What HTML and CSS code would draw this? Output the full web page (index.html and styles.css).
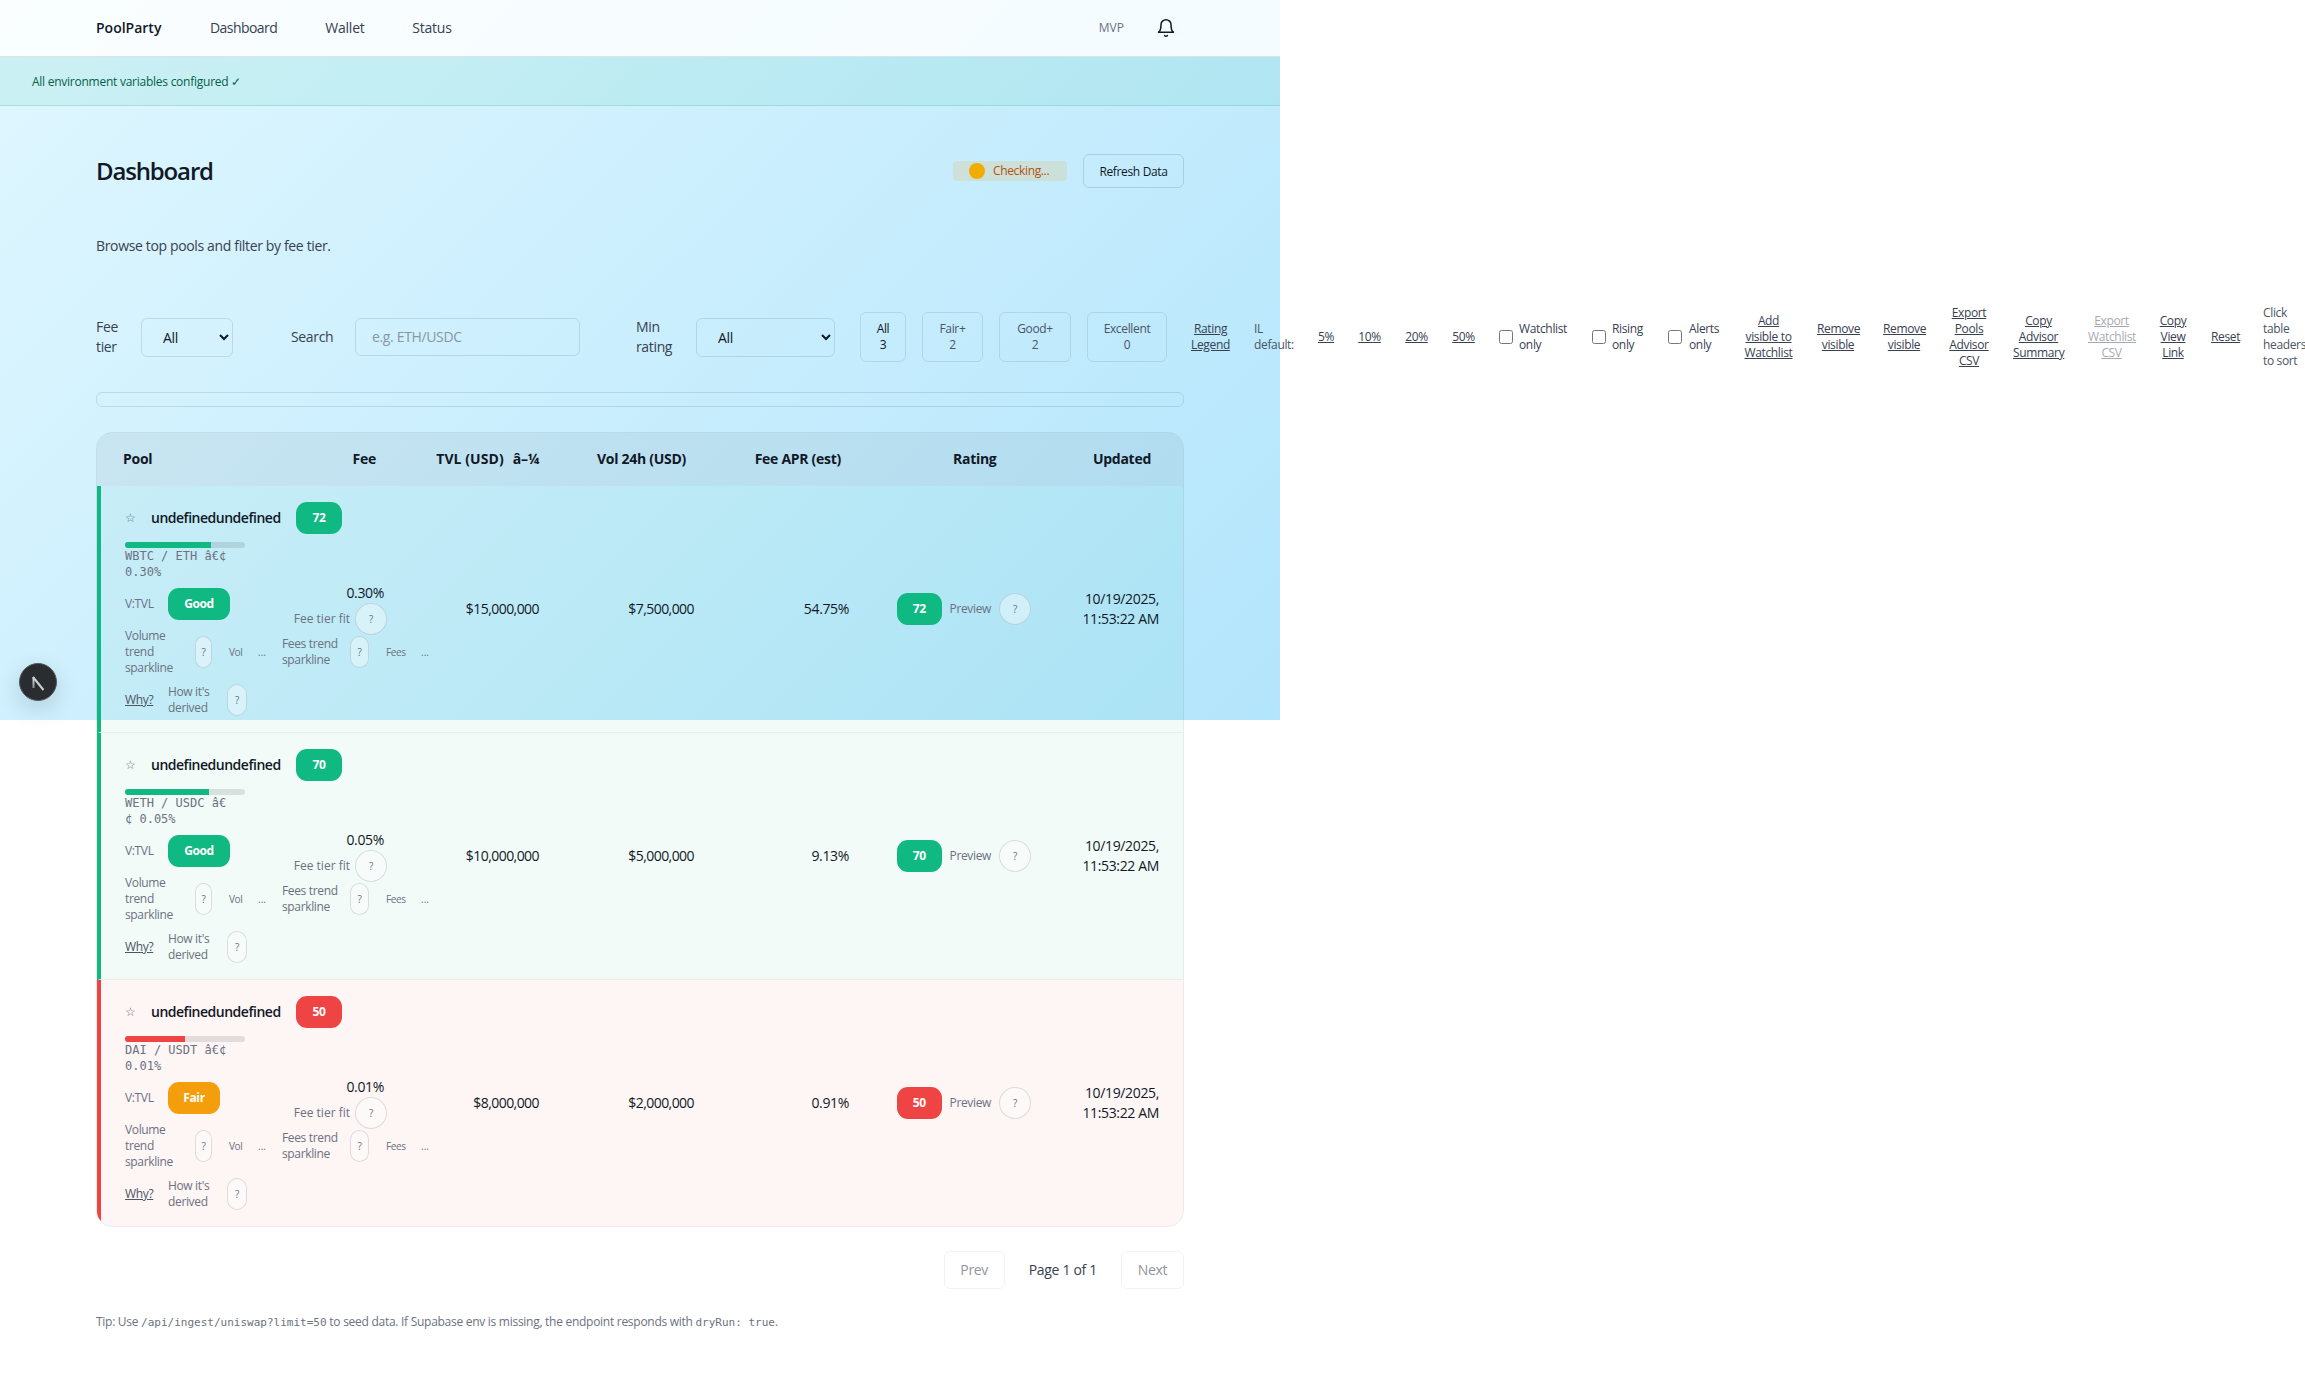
FILE: index.html
```html
<!DOCTYPE html>
<html lang="en">
<head>
<meta charset="utf-8">
<title>PoolParty</title>
<link rel="stylesheet" href="styles.css">
</head>
<body>
<div class="app">
  <nav class="nav">
    <div class="nav-left">
      <a class="brand">PoolParty</a>
      <a class="nav-link nl-tight">Dashboard</a>
      <a class="nav-link w39">Wallet</a>
      <a class="nav-link">Status</a>
    </div>
    <div class="nav-right">
      <span class="mvp">MVP</span>
      <button class="bell" aria-label="Notifications">
        <svg width="20" height="20" viewBox="0 0 24 24" fill="none" stroke="#111827" stroke-width="1.8" stroke-linecap="round" stroke-linejoin="round"><path d="M6 8a6 6 0 0 1 12 0c0 7 3 9 3 9H3s3-2 3-9"/><path d="M10.3 21a1.94 1.94 0 0 0 3.4 0"/></svg>
      </button>
    </div>
  </nav>
  <div class="banner">All environment variables configured ✓</div>
  <main class="main">
    <div class="title-row">
      <h1 class="title">Dashboard</h1>
      <div class="title-actions">
        <span class="status-pill"><span class="status-dot"></span>Checking...</span>
        <button class="refresh">Refresh Data</button>
      </div>
    </div>
    <p class="lead">Browse top pools and filter by fee tier.</p>

    <div class="filters">
      <label class="f-label w21">Fee tier</label>
      <select class="f-select sel-fee"><option>All</option></select>
      <label class="f-label f-gap w40">Search</label>
      <input class="f-input" placeholder="e.g. ETH/USDC">
      <label class="f-label f-gap2 w36">Min rating</label>
      <select class="f-select sel-rating"><option>All</option></select>
      <div class="pills">
        <button class="pill pill-on w46">All<br>3</button>
        <button class="pill w61">Fair+<br>2</button>
        <button class="pill w72">Good+<br>2</button>
        <button class="pill w80">Excellent<br>0</button>
      </div>
      <a class="tlink w39">Rating Legend</a>
      <span class="il w40">IL default:</span>
      <a class="tlink w16">5%</a>
      <a class="tlink w23">10%</a>
      <a class="tlink w23">20%</a>
      <a class="tlink w23">50%</a>
      <label class="check"><input type="checkbox"><span class="w49">Watchlist only</span></label>
      <label class="check"><input type="checkbox"><span class="w32">Rising only</span></label>
      <label class="check check-wide"><input type="checkbox"><span class="w31">Alerts only</span></label>
      <a class="tlink w49">Add visible to Watchlist</a>
      <a class="tlink w42">Remove visible</a>
      <a class="tlink w42">Remove visible</a>
      <a class="tlink w40">Export Pools Advisor CSV</a>
      <a class="tlink w51">Copy Advisor Summary</a>
      <a class="tlink tlink-off w47">Export Watchlist CSV</a>
      <a class="tlink w28">Copy View Link</a>
      <a class="tlink w28">Reset</a>
      <span class="il hint">Click table headers to sort</span>
    </div>

    <div class="progress"></div>

    <div class="table-wrap">
      <table class="pools">
        <colgroup>
          <col class="c-pool"><col class="c-fee"><col class="c-num"><col class="c-num"><col class="c-num"><col class="c-rating"><col class="c-date">
        </colgroup>
        <thead>
          <tr>
            <th class="th-pool">Pool</th>
            <th class="th-num">Fee</th>
            <th class="th-tvl">TVL (USD)<span class="sort">â–¼</span></th>
            <th class="th-num">Vol 24h (USD)</th>
            <th class="th-num">Fee APR (est)</th>
            <th class="th-rating">Rating</th>
            <th class="th-num">Updated</th>
          </tr>
        </thead>
        <tbody>
          <tr class="row row-good">
            <td class="td-pool"><div class="pool">
              <div class="p-top"><span class="star">☆</span><span class="p-name">undefinedundefined</span><span class="badge b-score b-green">72</span></div>
              <div class="p-meta"><div class="bar"><div class="bar-fill fill-green" style="width:72%"></div></div><div class="mono">WBTC / ETH â€¢<br>0.30%</div></div>
              <div class="p-vtvl"><span class="muted w27">V:TVL</span><span class="badge b-good b-green">Good</span></div>
              <div class="p-spark">
                <span class="muted s-vol">Volume trend sparkline</span><button class="q q-tall q-n1">?</button><span class="tiny t-vol">Vol</span><span class="tiny t-dot">...</span>
                <span class="muted s-fees">Fees trend<br>sparkline</span><button class="q q-tall q-n2">?</button><span class="tiny t-fees">Fees</span><span class="tiny t-dot">...</span>
              </div>
              <div class="p-why"><a class="why w27">Why?</a><span class="muted s-how">How it's derived</span><button class="q q-tall q-n3">?</button></div>
            </div></td>
            <td class="td-fee"><div class="fee-val">0.30%</div><div class="fee-fit"><span class="muted fit-label">Fee tier fit</span><button class="q q-round">?</button></div></td>
            <td class="td-num money">$15,000,000</td>
            <td class="td-num money">$7,500,000</td>
            <td class="td-num">54.75%</td>
            <td class="td-rating"><div class="rating"><span class="badge b-green b-r">72</span><span class="muted">Preview</span><button class="q q-round">?</button></div></td>
            <td class="td-num">10/19/2025, 11:53:22 AM</td>
          </tr>
          <tr class="row row-good">
            <td class="td-pool"><div class="pool">
              <div class="p-top"><span class="star">☆</span><span class="p-name">undefinedundefined</span><span class="badge b-score b-green">70</span></div>
              <div class="p-meta"><div class="bar"><div class="bar-fill fill-green" style="width:70%"></div></div><div class="mono">WETH / USDC â€<br>¢ 0.05%</div></div>
              <div class="p-vtvl"><span class="muted w27">V:TVL</span><span class="badge b-good b-green">Good</span></div>
              <div class="p-spark">
                <span class="muted s-vol">Volume trend sparkline</span><button class="q q-tall q-n1">?</button><span class="tiny t-vol">Vol</span><span class="tiny t-dot">...</span>
                <span class="muted s-fees">Fees trend<br>sparkline</span><button class="q q-tall q-n2">?</button><span class="tiny t-fees">Fees</span><span class="tiny t-dot">...</span>
              </div>
              <div class="p-why"><a class="why w27">Why?</a><span class="muted s-how">How it's derived</span><button class="q q-tall q-n3">?</button></div>
            </div></td>
            <td class="td-fee"><div class="fee-val">0.05%</div><div class="fee-fit"><span class="muted fit-label">Fee tier fit</span><button class="q q-round">?</button></div></td>
            <td class="td-num money">$10,000,000</td>
            <td class="td-num money">$5,000,000</td>
            <td class="td-num">9.13%</td>
            <td class="td-rating"><div class="rating"><span class="badge b-green b-r">70</span><span class="muted">Preview</span><button class="q q-round">?</button></div></td>
            <td class="td-num">10/19/2025, 11:53:22 AM</td>
          </tr>
          <tr class="row row-bad">
            <td class="td-pool"><div class="pool">
              <div class="p-top"><span class="star">☆</span><span class="p-name">undefinedundefined</span><span class="badge b-score b-red">50</span></div>
              <div class="p-meta"><div class="bar"><div class="bar-fill fill-red" style="width:50%"></div></div><div class="mono">DAI / USDT â€¢<br>0.01%</div></div>
              <div class="p-vtvl"><span class="muted w27">V:TVL</span><span class="badge b-fair b-amber">Fair</span></div>
              <div class="p-spark">
                <span class="muted s-vol">Volume trend sparkline</span><button class="q q-tall q-n1">?</button><span class="tiny t-vol">Vol</span><span class="tiny t-dot">...</span>
                <span class="muted s-fees">Fees trend<br>sparkline</span><button class="q q-tall q-n2">?</button><span class="tiny t-fees">Fees</span><span class="tiny t-dot">...</span>
              </div>
              <div class="p-why"><a class="why w27">Why?</a><span class="muted s-how">How it's derived</span><button class="q q-tall q-n3">?</button></div>
            </div></td>
            <td class="td-fee"><div class="fee-val">0.01%</div><div class="fee-fit"><span class="muted fit-label">Fee tier fit</span><button class="q q-round">?</button></div></td>
            <td class="td-num money">$8,000,000</td>
            <td class="td-num money">$2,000,000</td>
            <td class="td-num">0.91%</td>
            <td class="td-rating"><div class="rating"><span class="badge b-red b-r">50</span><span class="muted">Preview</span><button class="q q-round">?</button></div></td>
            <td class="td-num">10/19/2025, 11:53:22 AM</td>
          </tr>
        </tbody>
      </table>
    </div>

    <div class="pager">
      <button class="pg-btn">Prev</button>
      <span class="pg-text">Page 1 of 1</span>
      <button class="pg-btn">Next</button>
    </div>

    <p class="tip">Tip: Use <code>/api/ingest/uniswap?limit=50</code> to seed data. If Supabase env is missing, the endpoint responds with <code>dryRun: true</code>.</p>
  </main>
</div>

<div class="devtool">
  <svg width="38" height="38" viewBox="0 0 38 38" fill="none">
    <defs><linearGradient id="fade" gradientUnits="userSpaceOnUse" x1="0" y1="14" x2="0" y2="25"><stop offset="0" stop-color="#e2e2e2"/><stop offset="1" stop-color="#8a8a8a"/></linearGradient></defs>
    <path d="M14.5 25V14" stroke="url(#fade)" stroke-width="2"/>
    <path d="M14 14L24.5 27" stroke="#d0d0d0" stroke-width="2"/>
  </svg>
</div>
</body>
</html>
```

FILE: styles.css
```css
* { box-sizing: border-box; }
html { background: #fff; }
body {
  margin: 0;
  font-family: "Open Sans", "Noto Sans", "Liberation Sans", sans-serif;
  font-size: 14px;
  line-height: 20px;
  letter-spacing: -0.025em;
  color: #111827;
  background: linear-gradient(135deg, #e0f7ff 0%, #b3e5fc 100%) no-repeat 0 0 / 1280px 720px;
  overflow-x: hidden;
  position: relative;
}
button, select, input { font: inherit; letter-spacing: inherit; color: inherit; }
.app { width: 1280px; }

.w16 { width: 16px; } .w21 { width: 21px; } .w23 { width: 23px; } .w27 { width: 27px; }
.w28 { width: 28px; } .w31 { width: 31px; } .w32 { width: 32px; } .w36 { width: 36px; }
.w39 { width: 39px; } .w40 { width: 40px; } .w42 { width: 42px; }
.w46 { width: 46px; } .w47 { width: 47px; } .w49 { width: 49px; } .w51 { width: 51px; }
.w61 { width: 61px; } .w72 { width: 72px; } .w80 { width: 80px; }

.nav {
  display: flex; align-items: center; justify-content: space-between;
  height: 57px; padding: 0 96px;
  background: rgba(255,255,255,.82);
  border-bottom: 1px solid rgba(0,0,0,.1);
}
.nav-left { display: flex; align-items: center; gap: 48px; }
.nav-right { display: flex; align-items: center; gap: 24px; }
.brand { width: 66px; font-weight: 600; color: #111827; letter-spacing: 0; }
.nav-link { color: #374151; letter-spacing: -0.015em; }
.nl-tight { letter-spacing: -0.04em; }
.mvp { font-size: 12px; color: #6b7280; letter-spacing: 0; }
.bell { display: flex; padding: 8px; background: none; border: 0; }

.banner {
  height: 49px; padding: 17px 32px 0;
  font-size: 12px; line-height: 16px; color: #065f46; letter-spacing: -0.021em;
  background: rgba(16,185,129,.09);
  border-bottom: 1px solid rgba(16,185,129,.22);
}

.main { padding: 48px 96px 0; }
.title-row { display: flex; align-items: center; justify-content: space-between; height: 34px; }
.title { margin: 0; font-size: 24px; line-height: 32px; font-weight: 600; letter-spacing: -0.048em; }
.title-actions { display: flex; align-items: center; gap: 16px; }
.status-pill {
  display: flex; align-items: center; gap: 8px;
  height: 20px; width: 114px; padding: 0 16px;
  font-size: 12px; color: #b45309;
  background: rgba(245,158,11,.15); border-radius: 4px;
}
.status-dot { width: 16px; height: 16px; border-radius: 50%; background: #f0ad00; flex-shrink: 0; }
.refresh {
  height: 34px; width: 101px; padding: 1px 0 0;
  font-size: 12px; color: #111827;
  background: transparent; border: 1px solid rgba(0,0,0,.12); border-radius: 6px;
}
.lead { margin: 48px 0 0; color: #374151; }

.filters {
  display: flex; align-items: center; gap: 24px;
  width: 1088px; height: 64px; margin-top: 49px;
}
.filters > * { flex-shrink: 0; }
.f-label { color: #374151; }
.f-gap { margin-left: 34px; }
.f-gap2 { margin-left: 32px; }
.f-select {
  height: 39px; padding: 0 8px 0 17px; font-size: 14px; color: #111827;
  background: transparent; border: 1px solid rgba(0,0,0,.1); border-radius: 6px;
}
.sel-fee { width: 92px; }
.sel-rating { width: 139px; }
.f-input {
  width: 225px; height: 38px; padding: 0 16px 1px;
  background: transparent; border: 1px solid rgba(0,0,0,.1); border-radius: 6px;
}
.f-input::placeholder { color: #8a96a3; }
.pills { display: flex; gap: 16px; margin-left: 1px; }
.pill {
  height: 50px; padding: 0;
  font-size: 12px; line-height: 16px; color: #4b5563; text-align: center;
  background: transparent; border: 1px solid rgba(0,0,0,.09); border-radius: 6px;
}
.pill-on { color: #111827; }
.tlink {
  font-size: 12px; line-height: 16px; text-align: center;
  color: #374151; text-decoration: underline;
}
.tlink-off { opacity: .45; }
.il { font-size: 12px; line-height: 16px; color: #4b5563; }
.hint { width: 42px; }
.check { display: flex; align-items: center; gap: 6px; font-size: 12px; line-height: 16px; color: #374151; }
.check-wide { gap: 7px; }
.check input { margin: 0; width: 14px; height: 14px; flex-shrink: 0; }

.progress {
  height: 15px; margin-top: 23px;
  border: 1px solid rgba(0,0,0,.1); border-radius: 6px;
}

.table-wrap {
  width: 1088px; margin-top: 25px;
  border: 1px solid rgba(0,0,0,.08); border-radius: 16px;
  overflow: hidden;
}
.pools { width: 1086px; table-layout: fixed; border-collapse: separate; border-spacing: 0; }
.c-pool { width: 173px; }
.c-fee { width: 138px; }
.c-num { width: 155px; }
.c-rating { width: 182px; }
.c-date { width: 128px; }
thead tr { background: rgba(0,0,0,.05); }
th { height: 53px; padding: 15px 32px 17px 24px; font-weight: 700; text-align: right; color: #111827; letter-spacing: -0.02em; }
.th-pool { padding-left: 26px; text-align: left; }
.th-tvl { padding-right: 24px; padding-left: 0; letter-spacing: 0.005em; }
.sort { margin-left: 9px; letter-spacing: -0.02em; }
.th-rating { padding-left: 80px; padding-right: 0; text-align: left; }
.th-num { padding-left: 0; }

.row-good { background: rgba(16,185,129,.055); }
.row-bad { background: rgba(239,68,68,.055); }
td { padding: 16px 24px; border-bottom: 1px solid rgba(0,0,0,.05); vertical-align: middle; }
tbody tr:last-child td { border-bottom: 0; }
.row-good .td-pool { border-left: 4px solid #10b981; }
.row-bad .td-pool { border-left: 4px solid #ef4444; }
.td-num { text-align: right; color: #111827; padding-left: 0; }
.money { letter-spacing: -0.04em; }
.td-pool { vertical-align: top; }

.pool { display: flex; flex-direction: column; gap: 8px; width: 120px; }
.p-top, .p-vtvl, .p-spark, .p-why { display: flex; align-items: center; flex-shrink: 0; width: max-content; }
.p-top { gap: 16px; height: 32px; }
.star { width: 10px; font-size: 12px; color: #6b7280; }
.p-name { font-weight: 600; white-space: nowrap; letter-spacing: -0.035em; width: 129px; }
.badge {
  display: inline-flex; align-items: center; justify-content: center;
  height: 32px; border-radius: 11px;
  font-size: 12px; font-weight: 700; color: #fff;
}
.b-score { width: 46px; }
.b-good { width: 62px; }
.b-fair { width: 52px; }
.b-r { width: 45px; }
.b-green { background: #10b981; }
.b-red { background: #ef4444; }
.b-amber { background: #f59e0b; }
.bar { height: 6px; width: 120px; background: rgba(0,0,0,.1); border-radius: 99px; overflow: hidden; }
.bar-fill { height: 100%; }
.fill-green { background: #10b981; }
.fill-red { background: #ef4444; }
.p-meta { display: flex; flex-direction: column; }
.mono { font-family: "DejaVu Sans Mono", monospace; font-size: 12px; line-height: 16px; color: #6b7280; white-space: nowrap; letter-spacing: 0; }
.muted { font-size: 12px; line-height: 16px; color: #6b7280; }
.fit-label { letter-spacing: 0; }
.p-vtvl { gap: 16px; }
.p-spark { height: 48px; }
.s-vol { width: 54px; margin-right: 16px; }
.s-fees { width: 52px; white-space: nowrap; margin-left: 16px; margin-right: 16px; }
.tiny { font-size: 10px; color: #6b7280; }
.t-vol { width: 13px; margin: 0 16px 0 17px; white-space: nowrap; }
.t-fees { width: 19px; margin: 0 16px 0 17px; white-space: nowrap; }
.t-dot { width: 8px; letter-spacing: 0; }
.p-why { gap: 16px; height: 32px; }
.why { font-size: 12px; line-height: 16px; color: #4b5563; text-decoration: underline; }
.s-how { width: 42px; margin-right: 1px; }
.q {
  padding: 0; height: 32px; font-size: 10px; line-height: 1; color: #6b7280;
  background: rgba(255,255,255,.4); border: 1px solid rgba(0,0,0,.12); border-radius: 16px; flex-shrink: 0;
}
.q-n1 { width: 17px; }
.q-n2 { width: 19px; }
.q-n3 { width: 20px; }
.q-round { width: 32px; border-radius: 50%; }

.td-fee { text-align: right; padding-left: 0; }
.fee-fit { display: flex; justify-content: flex-end; align-items: center; gap: 5px; margin-right: -3px; white-space: nowrap; }
.rating { display: flex; align-items: center; gap: 8px; white-space: nowrap; }

.pager { display: flex; justify-content: flex-end; align-items: center; gap: 24px; margin-top: 24px; }
.pg-btn {
  height: 38px; width: 61px; padding: 0; color: #6b7280; opacity: .75;
  background: transparent; border: 1px solid rgba(0,0,0,.07); border-radius: 6px;
}
.pg-btn:last-child { width: 63px; }
.pg-text { color: #374151; letter-spacing: -0.022em; }
.tip { margin: 25px 0 0; font-size: 12px; line-height: 16px; color: #6b7280; letter-spacing: -0.023em; }
code { font-family: "DejaVu Sans Mono", monospace; font-size: 11px; letter-spacing: 0; }

.devtool {
  position: absolute; left: 19px; top: 663px;
  width: 38px; height: 38px; border-radius: 50%;
  background: #2a2d30; border: 1px solid #55585c;
  box-shadow: 0 8px 24px rgba(0,0,0,.15);
  overflow: hidden;
}
.devtool svg { display: block; margin: -1px; }
```
